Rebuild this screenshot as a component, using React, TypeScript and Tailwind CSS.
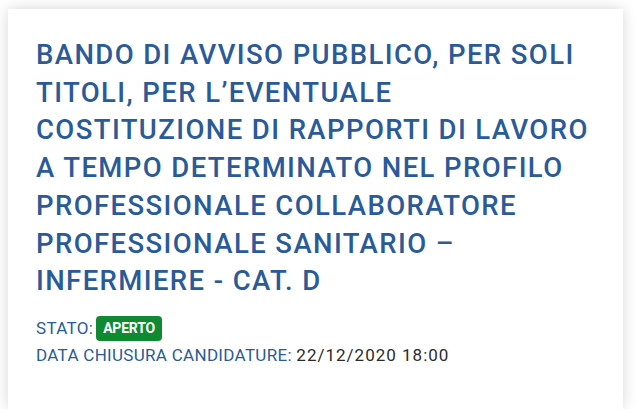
export default function App() {
  return (
    <div className="min-h-[409px] bg-white pt-[9px] pl-[8px] pr-[17px]" style={{ fontFamily: "Roboto, 'Noto Sans', sans-serif" }}>
      <div className="min-h-[400px] bg-white px-[28px] pt-[27px] shadow-[0_0_14px_rgba(0,0,0,0.16)]">
        <h2 className="text-[27.5px] leading-[37.7px] font-medium tracking-[1.4px] text-[#2a5b98]">
          BANDO DI AVVISO PUBBLICO, PER SOLI TITOLI, PER L’EVENTUALE COSTITUZIONE DI RAPPORTI DI LAVORO A TEMPO DETERMINATO NEL PROFILO PROFESSIONALE COLLABORATORE PROFESSIONALE SANITARIO – INFERMIERE - CAT. D
        </h2>
        <div className="mt-[16px] flex items-center gap-[3px] text-[17px] tracking-[0.3px] text-[#2a5b98]">
          <span>STATO:</span>
          <span className="flex h-[25px] items-center rounded-[4px] bg-[#0f8a32] px-[7px] text-[14px] font-bold tracking-[-0.2px] text-white">APERTO</span>
        </div>
        <div className="mt-[2px] text-[17px] tracking-[0.3px] text-[#2a5b98]">
          DATA CHIUSURA CANDIDATURE: <span className="tracking-[1px] text-[#2b2b2b]">22/12/2020 18:00</span>
        </div>
      </div>
    </div>
  );
}
